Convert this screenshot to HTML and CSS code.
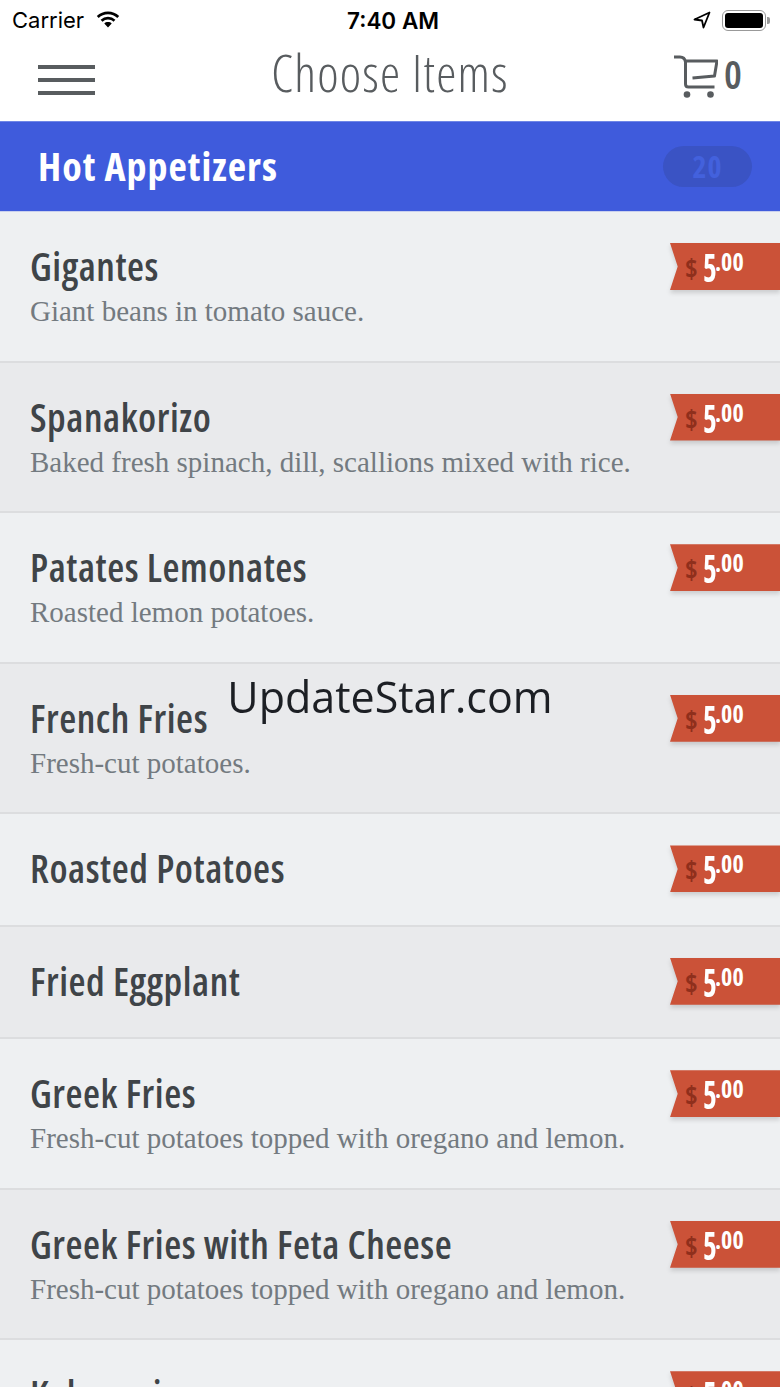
FILE: index.html
```html
<!DOCTYPE html>
<html>
  <head>
    <title>Choose Items</title>
    <link rel="stylesheet" href="styles.css">
  </head>
  <body>
    <div class="status">
      <div class="status-left">
        <span>Carrier</span>
        <svg class="wifi" viewBox="0 0 26 18"><path d="M13 3.200c3.600 0 6.900 1.400 9.300 3.700l1.900-2A16.300 16.300 0 0 0 13 .4 16.300 16.300 0 0 0 1.800 4.900l1.900 2A13.400 13.400 0 0 1 13 3.200zM13 8.600c2.100 0 4 .8 5.500 2.100l1.900-2A11 11 0 0 0 13 5.800a11 11 0 0 0-7.400 2.900l1.900 2A8.100 8.100 0 0 1 13 8.600zM13 11.100c-1.500 0-2.800.5-3.700 1.400L13 16.400l3.700-3.900c-.9-.9-2.200-1.400-3.700-1.400z"/></svg>
      </div>
      <div class="status-time">7:40 AM</div>
      <div class="status-right">
        <svg class="arrow" viewBox="0 0 18 18"><path d="M16.500 1.500 1.500 8.500l7.500 1 1.500 7z" fill="#fff" stroke="#000" stroke-width="1.800" stroke-linejoin="round"/></svg>
        <div class="battery"><div class="battery-fill"></div></div>
        <div class="battery-tip"></div>
      </div>
    </div>

    <header class="topbar">
      <div class="burger"><i></i><i></i><i></i></div>
      <h1>Choose Items</h1>
      <div class="cart">
        <svg viewBox="0 0 44 44"><path d="M0 2h6c3 0 5 2 5.500 5v22c0 2 1 3 3 3h26M11.500 6H43l-2.500 15-22 2" fill="none" stroke="#585c5f" stroke-width="3" stroke-linejoin="round"/><circle cx="13" cy="39.500" r="3.300" fill="#585c5f"/><circle cx="36.500" cy="39.500" r="3.300" fill="#585c5f"/></svg>
        <span>0</span>
      </div>
    </header>

    <section class="category">
      <h2>Hot Appetizers</h2>
      <span class="count">20</span>
    </section>

    <div class="item">
      <div class="item-text"><h3>Gigantes</h3><p>Giant beans in tomato sauce.</p></div>
      <div class="price"><div class="ribbon"><span class="dollar">$</span><span class="big">5</span><span class="cents">.00</span></div></div>
    </div>
    <div class="item alt">
      <div class="item-text"><h3>Spanakorizo</h3><p>Baked fresh spinach, dill, scallions mixed with rice.</p></div>
      <div class="price"><div class="ribbon"><span class="dollar">$</span><span class="big">5</span><span class="cents">.00</span></div></div>
    </div>
    <div class="item">
      <div class="item-text"><h3>Patates Lemonates</h3><p>Roasted lemon potatoes.</p></div>
      <div class="price"><div class="ribbon"><span class="dollar">$</span><span class="big">5</span><span class="cents">.00</span></div></div>
    </div>
    <div class="item alt">
      <div class="item-text"><h3>French Fries</h3><p>Fresh-cut potatoes.</p></div>
      <div class="price"><div class="ribbon"><span class="dollar">$</span><span class="big">5</span><span class="cents">.00</span></div></div>
    </div>
    <div class="item short">
      <div class="item-text"><h3>Roasted Potatoes</h3></div>
      <div class="price"><div class="ribbon"><span class="dollar">$</span><span class="big">5</span><span class="cents">.00</span></div></div>
    </div>
    <div class="item short alt">
      <div class="item-text"><h3>Fried Eggplant</h3></div>
      <div class="price"><div class="ribbon"><span class="dollar">$</span><span class="big">5</span><span class="cents">.00</span></div></div>
    </div>
    <div class="item">
      <div class="item-text"><h3>Greek Fries</h3><p>Fresh-cut potatoes topped with oregano and lemon.</p></div>
      <div class="price"><div class="ribbon"><span class="dollar">$</span><span class="big">5</span><span class="cents">.00</span></div></div>
    </div>
    <div class="item alt">
      <div class="item-text"><h3>Greek Fries with Feta Cheese</h3><p>Fresh-cut potatoes topped with oregano and lemon.</p></div>
      <div class="price"><div class="ribbon"><span class="dollar">$</span><span class="big">5</span><span class="cents">.00</span></div></div>
    </div>
    <div class="item">
      <div class="item-text"><h3>Kalamari</h3></div>
      <div class="price"><div class="ribbon"><span class="dollar">$</span><span class="big">5</span><span class="cents">.00</span></div></div>
    </div>

    <div class="watermark">UpdateStar.com</div>
  </body>
</html>
```

FILE: styles.css
```css
html, body {
  height: 1387px;
  overflow: hidden;
}
body {
  margin: 0;
  position: relative;
  background: #eef0f2;
  font-family: "Open Sans", "Noto Sans", sans-serif;
}
h1, h2, h3, p {
  margin: 0;
  font-weight: normal;
}

.status {
  height: 40px;
  background: #fff;
  display: flex;
  align-items: center;
  justify-content: space-between;
  padding: 0 10px 0 12px;
  color: #000;
  font-family: Inter, sans-serif;
  font-size: 22px;
  position: relative;
}
.status-left {
  display: flex;
  align-items: center;
  gap: 11px;
}
.wifi {
  width: 26px;
  height: 18px;
}
.status-time {
  position: absolute;
  left: 6px;
  right: 0;
  text-align: center;
  font-size: 22.500px;
  font-weight: 600;
}
.status-right {
  display: flex;
  align-items: center;
}
.arrow {
  width: 18px;
  height: 18px;
  margin-right: 11px;
}
.battery {
  width: 44px;
  height: 21px;
  box-sizing: border-box;
  border: 1.500px solid #999;
  border-radius: 6px;
  padding: 2px;
}
.battery-fill {
  height: 100%;
  background: #000;
  border-radius: 3px;
}
.battery-tip {
  width: 3px;
  height: 7px;
  background: #999;
  border-radius: 0 2px 2px 0;
  margin-left: 1px;
}

.topbar {
  height: 81px;
  background: #fff;
  display: flex;
  align-items: center;
  justify-content: space-between;
  padding: 0 38px;
  position: relative;
  color: #585c5f;
}
.burger {
  width: 57px;
  display: flex;
  flex-direction: column;
  gap: 9px;
  margin-top: -2px;
}
.burger i {
  display: block;
  height: 4px;
  background: #585c5f;
}
.topbar h1 {
  position: absolute;
  left: 0;
  right: 0;
  top: 1px;
  text-align: center;
  font-size: 51px;
  letter-spacing: 1.200px;
  line-height: 62px;
  font-weight: 300;
  font-stretch: 75%;
}
.cart {
  display: flex;
  align-items: center;
  gap: 6px;
  margin-top: -7px;
}
.cart svg {
  width: 44px;
  height: 44px;
}
.cart span {
  font-size: 40px;
  line-height: 44px;
  font-weight: 600;
  font-stretch: 75%;
  margin-top: -6px;
}

.category {
  height: 91px;
  background: #3f5bdc;
  border-top: 1px solid #6f86e6;
  border-bottom: 1px solid #c9d0ee;
  box-sizing: border-box;
  display: flex;
  align-items: center;
  justify-content: space-between;
  padding: 0 28px 0 38px;
}
.category h2 {
  color: #fff;
  font-size: 40px;
  letter-spacing: 1px;
  font-weight: 700;
  font-stretch: 75%;
  white-space: nowrap;
  margin-top: -3px;
}
.count {
  width: 89px;
  height: 41px;
  border-radius: 21px;
  background: #3a53c4;
  color: #4361dd;
  font-size: 30px;
  letter-spacing: 1px;
  font-stretch: 75%;
  font-weight: 700;
  line-height: 41px;
  text-align: center;
}

.item {
  height: 150.600px;
  box-sizing: border-box;
  padding-top: 29px;
  padding-left: 30px;
  background: #eef0f2;
  border-bottom: 2px solid #dcdddf;
  position: relative;
}
.item.alt {
  background: #e9eaec;
}
.item.short {
  height: 112.400px;
}
.item h3 {
  color: #3f4448;
  font-size: 39px;
  letter-spacing: 0.550px;
  line-height: 50px;
  font-weight: 600;
  font-stretch: 75%;
  white-space: nowrap;
}
.item p {
  color: #737a80;
  font-family: "Liberation Serif", serif;
  font-size: 29px;
  line-height: 36px;
  margin-top: 2px;
  white-space: nowrap;
}
.price {
  position: absolute;
  top: 31px;
  right: 0;
  filter: drop-shadow(0 3px 2px rgba(0, 0, 0, 0.14));
}
.ribbon {
  width: 110px;
  height: 47px;
  box-sizing: border-box;
  padding-left: 15px;
  background: #cb5238;
  clip-path: polygon(0 0, 100% 0, 100% 100%, 0 100%, 7% 50%);
  display: flex;
  align-items: flex-start;
  color: #fff;
  font-weight: 700;
  font-stretch: 75%;
  white-space: nowrap;
}
.dollar {
  color: #8f2f1c;
  font-size: 27px;
  line-height: 50px;
  width: 18px;
}
.big {
  font-size: 39px;
  line-height: 48px;
  width: 12px;
  transform: scaleX(0.75);
  transform-origin: left;
}
.cents {
  font-size: 24px;
  line-height: 38px;
}

.watermark {
  position: absolute;
  top: 670px;
  left: 0;
  right: 0;
  text-align: center;
  color: #1c1f24;
  font-size: 43px;
  line-height: 54px;
}
```
